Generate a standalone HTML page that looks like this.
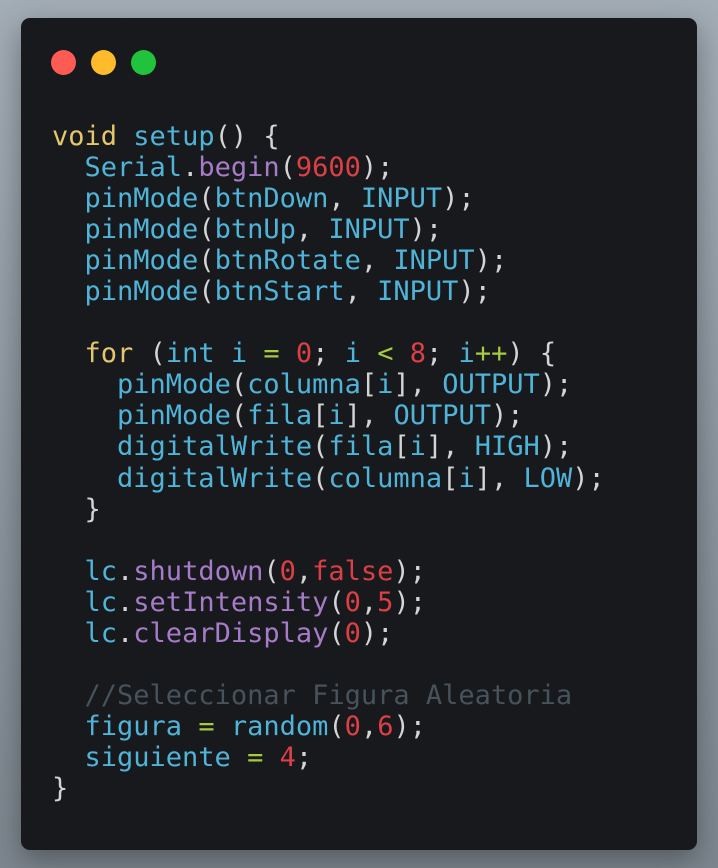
<!DOCTYPE html>
<html><head><meta charset="utf-8"><style>
html,body{margin:0;padding:0}
body{width:718px;height:868px;background:linear-gradient(180deg,#a3adb6 0%,#8a949d 60%,#7d868f 100%);position:relative;overflow:hidden}
.card{position:absolute;left:21px;top:18px;width:676px;height:832px;background:#17191c;border-radius:9px;box-shadow:0 10px 30px rgba(0,0,0,.35)}
.dot{position:absolute;top:32px;width:25px;height:25px;border-radius:50%}
pre{position:absolute;left:31px;top:103px;margin:0;font-family:"DejaVu Sans Mono","Liberation Mono",monospace;font-size:27px;line-height:31.05px;color:#d4d4d4}
.k{color:#e5c76b}.f{color:#4fb4d8}.p{color:#a67cc8}.n{color:#dc3f45}.o{color:#a6cc3e}.c{color:#47525b}
</style></head><body>
<div class="card">
<div class="dot" style="left:30px;background:#ff5b55"></div>
<div class="dot" style="left:70px;background:#ffbb2b"></div>
<div class="dot" style="left:110px;background:#22c33c"></div>
<pre><span class="k">void</span> <span class="f">setup</span>() {
  <span class="f">Serial</span>.<span class="p">begin</span>(<span class="n">9600</span>);
  <span class="f">pinMode</span>(<span class="f">btnDown</span>, <span class="f">INPUT</span>);
  <span class="f">pinMode</span>(<span class="f">btnUp</span>, <span class="f">INPUT</span>);
  <span class="f">pinMode</span>(<span class="f">btnRotate</span>, <span class="f">INPUT</span>);
  <span class="f">pinMode</span>(<span class="f">btnStart</span>, <span class="f">INPUT</span>);

  <span class="k">for</span> (<span class="f">int</span> <span class="f">i</span> <span class="o">=</span> <span class="n">0</span>; <span class="f">i</span> <span class="o">&lt;</span> <span class="n">8</span>; <span class="f">i</span><span class="o">++</span>) {
    <span class="f">pinMode</span>(<span class="f">columna</span>[<span class="f">i</span>], <span class="f">OUTPUT</span>);
    <span class="f">pinMode</span>(<span class="f">fila</span>[<span class="f">i</span>], <span class="f">OUTPUT</span>);
    <span class="f">digitalWrite</span>(<span class="f">fila</span>[<span class="f">i</span>], <span class="f">HIGH</span>);
    <span class="f">digitalWrite</span>(<span class="f">columna</span>[<span class="f">i</span>], <span class="f">LOW</span>);
  }

  <span class="f">lc</span>.<span class="p">shutdown</span>(<span class="n">0</span>,<span class="n">false</span>);
  <span class="f">lc</span>.<span class="p">setIntensity</span>(<span class="n">0</span>,<span class="n">5</span>);
  <span class="f">lc</span>.<span class="p">clearDisplay</span>(<span class="n">0</span>);

  <span class="c">//Seleccionar Figura Aleatoria</span>
  <span class="f">figura</span> <span class="o">=</span> <span class="f">random</span>(<span class="n">0</span>,<span class="n">6</span>);
  <span class="f">siguiente</span> <span class="o">=</span> <span class="n">4</span>;
}</pre>
</div>
</body></html>
